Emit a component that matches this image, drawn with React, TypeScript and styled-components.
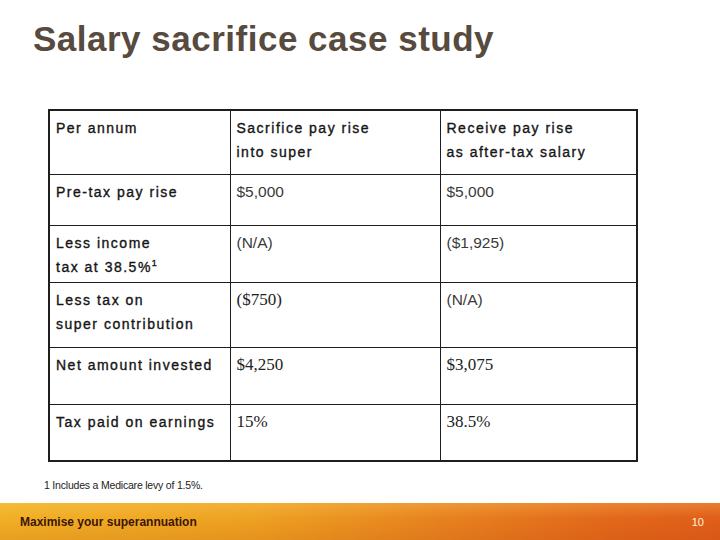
import React from "react";
import styled, { createGlobalStyle } from "styled-components";

const Global = createGlobalStyle`
  html, body { margin: 0; padding: 0; background: #fff; }
  body { font-family: "Liberation Sans", Arial, sans-serif; }
`;

const Page = styled.div`
  width: 720px;
  height: 540px;
  display: flex;
  flex-direction: column;
  overflow: hidden;
`;

const Title = styled.h1`
  margin: 0;
  padding: 17px 0 0 33px;
  height: 109px;
  box-sizing: border-box;
  font-family: "Liberation Sans", Arial, sans-serif;
  font-weight: bold;
  font-size: 35px;
  line-height: 44px;
  color: #574a3e;
  letter-spacing: 0.5px;
`;

const Table = styled.table`
  margin-left: 48px;
  width: 590px;
  border-collapse: collapse;
  border: 2px solid #1e1e1e;
  table-layout: fixed;
`;

const Row = styled.tr<{ $h: number }>`
  height: ${(p) => p.$h}px;
`;

const Cell = styled.td<{ $w?: number }>`
  ${(p) => (p.$w ? `width: ${p.$w}px;` : "")}
  border: 1px solid #1e1e1e;
  vertical-align: top;
  padding: 5px 0 0 6px;
  box-sizing: border-box;
  line-height: 24px;
`;

const Label = styled.span`
  font-family: "Liberation Sans", Arial, sans-serif;
  font-size: 14px;
  color: #151515;
  letter-spacing: 1.5px;
  -webkit-text-stroke: 0.35px #151515;
`;

const Sans = styled.span`
  font-family: "Liberation Sans", Arial, sans-serif;
  font-size: 15.5px;
  color: #3a3a3a;
`;

const Serif = styled.span`
  font-family: "Liberation Serif", "Times New Roman", serif;
  font-size: 17px;
  color: #222;
`;

const Sup = styled.sup`
  font-size: 9px;
  line-height: 0;
  letter-spacing: 0;
`;

const Note = styled.div`
  margin: 17px 0 0 44px;
  font-family: "Liberation Sans", Arial, sans-serif;
  font-size: 10.5px;
  color: #222;
  letter-spacing: -0.2px;
`;

const Footer = styled.div`
  margin-top: auto;
  height: 37px;
  display: flex;
  align-items: center;
  justify-content: space-between;
  padding: 0 16px 0 20px;
  background:
    linear-gradient(to bottom, rgba(255, 220, 120, 0.25), rgba(0, 0, 0, 0) 40%, rgba(160, 40, 0, 0.12)),
    linear-gradient(to right, #f1b025 0%, #eea222 35%, #e8841f 60%, #e3681b 85%, #e05e19 100%);
`;

const FooterText = styled.span`
  font-family: "Liberation Sans", Arial, sans-serif;
  font-weight: bold;
  font-size: 12px;
  color: #3b1608;
`;

const PageNum = styled.span`
  font-family: "Liberation Sans", Arial, sans-serif;
  font-size: 11px;
  color: #fff4dc;
`;

const rows: { h: number; label: React.ReactNode; a: React.ReactNode; b: React.ReactNode }[] = [
  {
    h: 51,
    label: <Label>Pre-tax pay rise</Label>,
    a: <Sans>$5,000</Sans>,
    b: <Sans>$5,000</Sans>,
  },
  {
    h: 57,
    label: (
      <Label>
        Less income
        <br />
        tax at 38.5%<Sup>1</Sup>
      </Label>
    ),
    a: <Sans>(N/A)</Sans>,
    b: <Sans>($1,925)</Sans>,
  },
  {
    h: 65,
    label: (
      <Label>
        Less tax on
        <br />
        super contribution
      </Label>
    ),
    a: <Serif>($750)</Serif>,
    b: <Sans>(N/A)</Sans>,
  },
  {
    h: 57,
    label: <Label>Net amount invested</Label>,
    a: <Serif>$4,250</Serif>,
    b: <Serif>$3,075</Serif>,
  },
  {
    h: 57,
    label: <Label>Tax paid on earnings</Label>,
    a: <Serif>15%</Serif>,
    b: <Serif>38.5%</Serif>,
  },
];

export default function App() {
  return (
    <Page>
      <Global />
      <Title>Salary sacrifice case study</Title>
      <Table>
        <tbody>
          <Row $h={64}>
            <Cell $w={181}>
              <Label>Per annum</Label>
            </Cell>
            <Cell $w={210}>
              <Label>
                Sacrifice pay rise
                <br />
                into super
              </Label>
            </Cell>
            <Cell>
              <Label>
                Receive pay rise
                <br />
                as after-tax salary
              </Label>
            </Cell>
          </Row>
          {rows.map((r, i) => (
            <Row key={i} $h={r.h}>
              <Cell>{r.label}</Cell>
              <Cell>{r.a}</Cell>
              <Cell>{r.b}</Cell>
            </Row>
          ))}
        </tbody>
      </Table>
      <Note>1 Includes a Medicare levy of 1.5%.</Note>
      <Footer>
        <FooterText>Maximise your superannuation</FooterText>
        <PageNum>10</PageNum>
      </Footer>
    </Page>
  );
}
